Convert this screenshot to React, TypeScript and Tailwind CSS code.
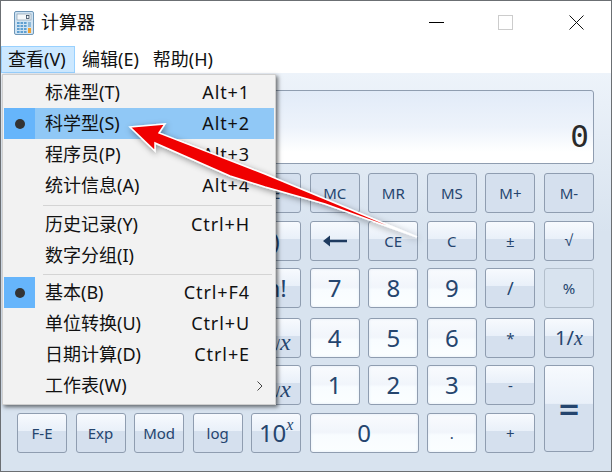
import type { ReactNode } from "react";

const rows: { label?: ReactNode; kind: string; size?: string; extra?: string }[] = [
	{ kind: "flat" }, { kind: "flat" }, { kind: "flat" }, { kind: "flat" },
	{ label: "E", kind: "flat" },
	{ label: "MC", kind: "flat" }, { label: "MR", kind: "flat" }, { label: "MS", kind: "flat" }, { label: "M+", kind: "flat" }, { label: "M-", kind: "flat" },

	{ kind: "fn" }, { kind: "fn" }, { kind: "fn" }, { kind: "fn" },
	{ label: ")", kind: "fn", size: "text-[22px]" },
	{ label: <Backspace />, kind: "fn" }, { label: "CE", kind: "fn" }, { label: "C", kind: "fn" }, { label: "±", kind: "fn" },
	{ label: <span className="font-['Liberation_Sans',sans-serif]">√</span>, kind: "fn", size: "text-[16px]" },

	{ kind: "fn" }, { kind: "fn" }, { kind: "fn" }, { kind: "fn" },
	{ label: "n!", kind: "fn", size: "text-[24px]" },
	{ label: "7", kind: "num" }, { label: "8", kind: "num" }, { label: "9", kind: "num" }, { label: "/", kind: "fn", size: "text-[18px]" }, { label: "%", kind: "off" },

	{ kind: "fn" }, { kind: "fn" }, { kind: "fn" }, { kind: "fn" },
	{ label: <Root index="y" />, kind: "fn" },
	{ label: "4", kind: "num" }, { label: "5", kind: "num" }, { label: "6", kind: "num" }, { label: "*", kind: "fn" },
	{ label: <>1/<Var /></>, kind: "fn", size: "text-[20px]" },

	{ kind: "fn" }, { kind: "fn" }, { kind: "fn" }, { kind: "fn" },
	{ label: <Root index="3" />, kind: "fn" },
	{ label: "1", kind: "num" }, { label: "2", kind: "num" }, { label: "3", kind: "num" }, { label: "-", kind: "fn" },
	{ label: "=", kind: "fn", size: "text-[36px] font-semibold", extra: "row-span-2 h-[87px] pt-[3px]" },

	{ label: "F-E", kind: "fn" }, { label: "Exp", kind: "fn" }, { label: "Mod", kind: "fn" }, { label: "log", kind: "fn" },
	{ label: <>10<sup className="text-[16px] italic font-['Liberation_Serif',serif]">x</sup></>, kind: "fn", size: "text-[24px]" },
	{ label: "0", kind: "num", extra: "col-span-2 w-[109px]" },
	{ label: ".", kind: "num", size: "text-[15px]" }, { label: "+", kind: "fn" },
];

const kinds: Record<string, string> = {
	flat: "bg-[#d5e0ee] border-[#8f9db0]",
	fn: "bg-[linear-gradient(180deg,#f7fafe_0%,#e9f0f9_44%,#d5e0ee_45%,#d5e0ee_100%)] border-[#8f9db0]",
	num: "bg-[linear-gradient(180deg,#f9fbfe_0%,#f1f5fb_48%,#f8fcff_55%,#fbfeff_100%)] border-[#8f9db0] shadow-[inset_0_0_3px_#e3ebf5]",
	off: "bg-[#d8e3ef] border-[#b3bfcc]",
};

function Var() {
	return <span className="italic font-['Liberation_Serif',serif]">x</span>;
}

function Root({ index }: { index: string }) {
	return (
		<span className="text-[22px] whitespace-nowrap font-['Liberation_Sans',sans-serif] relative top-[4px] left-[3px]">
			<sup className="text-[9px]">{index}</sup>
			<span className="text-[14px]">√</span>
			<span className="text-[24px]"><Var /></span>
		</span>
	);
}

function Backspace() {
	return (
		<svg width="26" height="14" viewBox="0 0 26 14" className="block">
			<path d="M1 7 L8 1.5 V5.8 H25 V8.2 H8 V12.5 Z" fill="#1e3a5f" />
		</svg>
	);
}

function CalcIcon() {
	return (
		<svg width="20" height="24" viewBox="0 0 20 24" className="block">
			<rect x="0.5" y="0.5" width="19" height="23" rx="1.5" fill="#cfe3f3" stroke="#6f97b8" />
			<rect x="3" y="3" width="14" height="6" fill="#f4f8fb" stroke="#7f93a6" strokeWidth="0.6" />
			<rect x="12.5" y="4.5" width="2.5" height="3" fill="none" stroke="#33485c" strokeWidth="0.8" />
			{[11, 14, 17, 20].map((y) =>
				[3, 6.5, 10].map((x) => (
					<rect key={`${x}-${y}`} x={x} y={y} width="2.6" height="2" fill="#5f9fd0" />
				))
			)}
			<rect x="14" y="11" width="3" height="5" fill="#8fb9d8" />
			<rect x="14" y="17" width="3" height="5" fill="#f0a030" />
		</svg>
	);
}

const menu: ({ label: string; keys?: string; dot?: boolean; active?: boolean; more?: boolean } | { sep: string })[] = [
	{ label: "标准型(T)", keys: "Alt+1" },
	{ label: "科学型(S)", keys: "Alt+2", dot: true, active: true },
	{ label: "程序员(P)", keys: "Alt+3" },
	{ label: "统计信息(A)", keys: "Alt+4" },
	{ sep: "h-[8px]" },
	{ label: "历史记录(Y)", keys: "Ctrl+H" },
	{ label: "数字分组(I)" },
	{ sep: "h-[6px]" },
	{ label: "基本(B)", keys: "Ctrl+F4", dot: true },
	{ label: "单位转换(U)", keys: "Ctrl+U" },
	{ label: "日期计算(D)", keys: "Ctrl+E" },
	{ label: "工作表(W)", more: true },
];

export default function App() {
	return (
		<div className="relative w-[612px] h-[472px] overflow-hidden border border-[#6b6f73] bg-white flex flex-col font-['Noto_Sans','Noto_Sans_CJK_SC',sans-serif] text-[18px] text-[#111]">
			{/* title bar */}
			<div className="h-[45px] flex items-center pl-[13px] pb-[2px]">
				<CalcIcon />
				<span className="ml-[7px] text-[18px]">计算器</span>
				<div className="ml-auto flex items-center">
					<div className="w-[15px] h-px bg-black mr-[54px]" />
					<div className="w-[15px] h-[15px] border border-[#cccccc] mr-[56px]" />
					<svg width="15" height="15" viewBox="0 0 15 15" className="mr-[27px]">
						<path d="M0.5 0.5 L14.5 14.5 M14.5 0.5 L0.5 14.5" stroke="#111" strokeWidth="1" />
					</svg>
				</div>
			</div>

			{/* menu bar */}
			<div className="h-[27px] flex items-center">
				<div className="h-[27px] w-[74px] flex items-center pl-[6px] pb-[1px] bg-[#cce8ff] border border-[#99d1ff]">查看(V)</div>
				<div className="ml-[7px] pb-[1px]">编辑(E)</div>
				<div className="ml-[14px] pb-[1px]">帮助(H)</div>
			</div>

			{/* calculator body */}
			<div className="flex-1 px-[16px] pt-[17px] bg-[linear-gradient(180deg,#edf3fa_0%,#d8e3ef_40%,#d8e3ef_100%)]">
				<div className="h-[74px] w-[577px] border border-[#8f9db0] rounded-[3px] flex items-end justify-end pr-[4px] pb-[7px] bg-[linear-gradient(180deg,#e2ebf8_0%,#edf3fb_50%,#ffffff_85%)]">
					<span className="text-[31px] leading-[40px] text-[#2a2a2a] font-['DejaVu_Sans_Mono',monospace]">0</span>
				</div>
				<div className="mt-[9px] grid grid-cols-[repeat(10,50px)] gap-x-[8.55px] grid-rows-[48px_47px_50px_47px_48px_40px] text-[#25456e]">
					{rows.map((b, i) => (
						<div
							key={i}
							className={`flex items-center justify-center w-[50px] h-[40px] border rounded-[3px] ${kinds[b.kind]} ${b.size ?? (b.kind === "num" ? "text-[24px]" : "text-[15px]")} ${b.extra ?? ""}`}
						>
							{b.label}
						</div>
					))}
				</div>
			</div>

			{/* open menu */}
			<div className="absolute left-[1px] top-[73px] w-[274px] h-[331px] pt-[2px] px-[1px] bg-[#f2f2f2] border border-[#cfcfcf] shadow-[2px_2px_4px_rgba(0,0,0,0.55)]">
				{menu.map((m, i) =>
					"sep" in m ? (
						<div key={i} className={`${m.sep} flex items-center pl-[39px] pr-[2px]`}>
							<div className="h-px w-full bg-[#d4d4d4]" />
						</div>
					) : (
						<div key={i} className={`h-[31px] flex items-center ${m.active ? "bg-[#90c8f6]" : ""}`}>
							<div className={`w-[31px] h-[31px] flex items-center justify-center ${m.dot ? "bg-[#66b5fb]" : ""}`}>
								{m.dot && <div className="w-[10px] h-[10px] rounded-full bg-[#333333]" />}
							</div>
							<span className="ml-[10px]">{m.label}</span>
							{m.keys && <span className="ml-auto mr-[24px] tracking-[0.9px]">{m.keys}</span>}
							{m.more && (
								<svg width="6" height="10" viewBox="0 0 6 10" className="ml-auto mr-[11px]">
									<path d="M0.5 0.5 L5 5 L0.5 9.5" fill="none" stroke="#444" />
								</svg>
							)}
						</div>
					)
				)}
			</div>

			{/* annotation arrow */}
			<svg width="612" height="472" viewBox="0 0 612 472" className="absolute left-[-1px] top-[-1px] pointer-events-none">
				<defs>
					<filter id="arrowShadow" x="-10%" y="-20%" width="120%" height="140%">
						<feDropShadow dx="1" dy="2" stdDeviation="3" floodColor="#000" floodOpacity="0.4" />
					</filter>
				</defs>
				<polygon
					points="130,127 165,124 159,133 265,174 417,237 325,204 265,187 230,176 155,143 155,151"
					fill="#f00000"
					stroke="#ffffff"
					strokeWidth="1.5"
					strokeLinejoin="miter"
					filter="url(#arrowShadow)"
				/>
			</svg>
		</div>
	);
}
